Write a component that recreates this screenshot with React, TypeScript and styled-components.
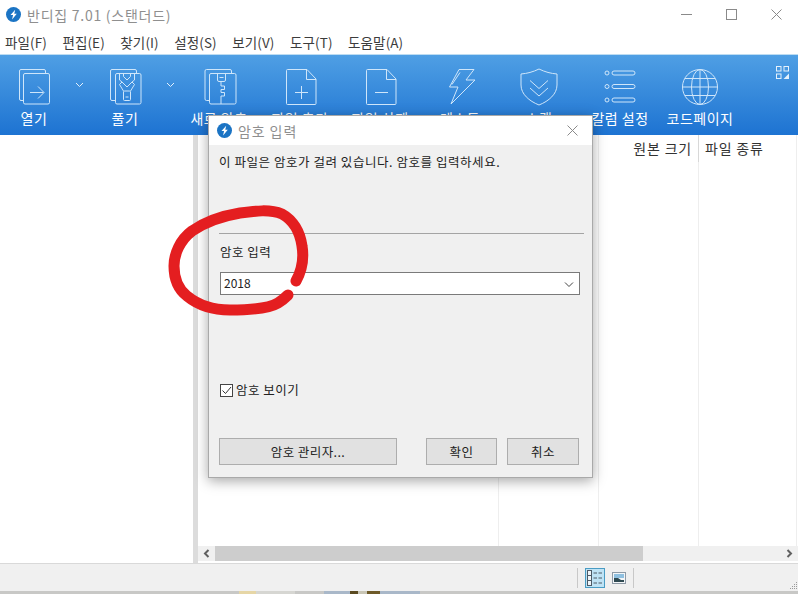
import React from "react";
import styled, { createGlobalStyle } from "styled-components";

const FONT = `"Noto Sans CJK KR", "Noto Sans", sans-serif`;

const Global = createGlobalStyle`
  html, body { margin: 0; padding: 0; background: #fff; overflow: hidden; }
  body { font-family: ${FONT}; }
  * { box-sizing: border-box; }
`;

const Page = styled.div`
  position: relative;
  width: 798px;
  height: 594px;
  display: flex;
  flex-direction: column;
  overflow: hidden;
  background: #fff;
`;

const TitleBar = styled.div`
  height: 29px;
  display: flex;
  align-items: center;
  padding-left: 6px;
  gap: 6px;
  flex: none;
`;
const TitleText = styled.span`
  font-size: 14px;
  color: #8f8f8f;
  letter-spacing: 0.75px;
`;
const WinButtons = styled.div`
  margin-left: auto;
  margin-right: -1px;
  display: flex;
  align-items: center;
  height: 100%;
`;
const WinButton = styled.div`
  width: 45px;
  height: 29px;
  display: flex;
  align-items: center;
  justify-content: center;
`;

const MenuBar = styled.div`
  height: 25px;
  display: flex;
  align-items: center;
  padding-left: 5px;
  gap: 15.5px;
  flex: none;
`;
const MenuItem = styled.span`
  font-size: 13.5px;
  color: #3c3c3c;
  letter-spacing: 0.1px;
`;

const Toolbar = styled.div`
  height: 81px;
  flex: none;
  border-top: 1px solid #bcdcf2;
  background: linear-gradient(#4f9fe4, #1d73d2);
  display: flex;
  position: relative;
`;
const ToolButton = styled.div<{ $w: number }>`
  width: ${(p) => p.$w}px;
  display: flex;
  flex-direction: column;
  align-items: center;
  padding-top: 13px;
  color: #fff;
`;
const ToolIcon = styled.svg`
  width: 44px;
  height: 38px;
  display: block;
  fill: none;
  stroke: #cfe6fa;
  stroke-width: 1;
`;
const ToolLabel = styled.span`
  font-size: 14px;
  line-height: 18px;
  margin-top: 3px;
  white-space: nowrap;
  color: #fff;
  letter-spacing: 0.5px;
`;
const DropChevron = styled.div<{ $w: number }>`
  width: ${(p) => p.$w}px;
  padding-top: 27px;
  display: flex;
  justify-content: center;
`;
const LayoutIcon = styled.svg`
  position: absolute;
  right: 9px;
  top: 11px;
  width: 13px;
  height: 13px;
`;

const Body = styled.div`
  flex: 1;
  display: flex;
  min-height: 0;
`;
const Tree = styled.div`
  width: 193px;
  background: #fff;
`;
const Splitter = styled.div`
  width: 5px;
  background: #dcdcdc;
`;
const ListPane = styled.div`
  flex: 1;
  display: flex;
  flex-direction: column;
  border-bottom: 2px solid #fff;
`;
const Columns = styled.div`
  flex: 1;
  display: flex;
`;
const Column = styled.div<{ $w: number }>`
  width: ${(p) => p.$w}px;
  flex: none;
  border-right: 1px solid #eeeeee;
  position: relative;
`;
const ColumnHead = styled.div<{ $right?: boolean }>`
  height: 25px;
  display: flex;
  align-items: center;
  justify-content: ${(p) => (p.$right ? "flex-end" : "flex-start")};
  padding: ${(p) => (p.$right ? "0 6px 0 0" : "0 0 0 6px")};
  font-size: 14px;
  letter-spacing: 0.8px;
  color: #333;
  white-space: nowrap;
`;
const HeadDivider = styled.div`
  position: absolute;
  right: -1px;
  top: 0;
  width: 1px;
  height: 27px;
  background: #d8d8d8;
`;
const HScroll = styled.div`
  height: 15px;
  flex: none;
  background: #f0f0f0;
  display: flex;
  align-items: center;
`;
const ScrollArrow = styled.div`
  width: 17px;
  height: 15px;
  display: flex;
  align-items: center;
  justify-content: center;
  flex: none;
`;
const ScrollThumb = styled.div`
  width: 428px;
  height: 15px;
  background: #cdcdcd;
  flex: none;
`;
const ScrollSpacer = styled.div`
  flex: 1;
`;

const StatusBar = styled.div`
  height: 28px;
  flex: none;
  background: #f0f0f0;
  border-top: 1px solid #d9d9d9;
  display: flex;
  align-items: center;
  justify-content: flex-end;
  position: relative;
`;
const StatusGroup = styled.div`
  display: flex;
  align-items: center;
  height: 20px;
  border-left: 1px solid #c8c8c8;
  border-right: 1px solid #c8c8c8;
  padding: 0 7px;
  gap: 7px;
  margin-right: 164px;
`;
const ViewActive = styled.div`
  width: 20px;
  height: 20px;
  background: #bfe3f5;
  border: 1px solid #4a9cc4;
  display: flex;
  align-items: center;
  justify-content: center;
`;
const Grip = styled.svg`
  position: absolute;
  right: 0;
  bottom: 1px;
  width: 10px;
  height: 10px;
`;
const Desktop = styled.div`
  height: 3px;
  flex: none;
  background: #c8c8c6;
  display: flex;
  padding-left: 239px;
`;
const DesktopPiece = styled.div<{ $w: number; $c: string; $ml?: number }>`
  width: ${(p) => p.$w}px;
  margin-left: ${(p) => p.$ml ?? 0}px;
  background: ${(p) => p.$c};
`;

/* dialog floats over the window */
const Dialog = styled.div`
  position: absolute;
  left: 208px;
  top: 115px;
  width: 385px;
  height: 363px;
  background: #f0f0f0;
  border: 1px solid #a9a9a9;
  box-shadow: 0 3px 12px rgba(0, 0, 0, 0.35);
  display: flex;
  flex-direction: column;
`;
const DialogTitle = styled.div`
  height: 29px;
  flex: none;
  background: #fff;
  display: flex;
  align-items: center;
  padding: 0 14px 0 8px;
  gap: 6px;
`;
const DialogTitleText = styled.span`
  font-size: 14px;
  color: #8f8f8f;
  letter-spacing: 0.9px;
`;
const DialogClose = styled.svg`
  margin-left: auto;
  width: 11px;
  height: 11px;
`;
const DialogBody = styled.div`
  flex: 1;
  display: flex;
  flex-direction: column;
  padding: 0 8px 0 10px;
`;
const Message = styled.div`
  font-size: 12.5px;
  line-height: 18px;
  color: #222;
  margin-top: 8px;
  letter-spacing: 0.55px;
`;
const Rule = styled.div`
  height: 1px;
  background: #a4a4a4;
  margin-top: 62px;
`;
const FieldLabel = styled.div`
  font-size: 12.5px;
  line-height: 18px;
  color: #222;
  margin-top: 9px;
  margin-left: 1px;
  letter-spacing: 0.5px;
`;
const Combo = styled.div`
  height: 23px;
  margin: 11px 4px 0 1px;
  border: 1px solid #7a7a7a;
  background: #fff;
  display: flex;
  align-items: center;
  padding: 0 3px 2px 3px;
  font-size: 12px;
  color: #222;
`;
const ComboChevron = styled.svg`
  margin-left: auto;
  margin-top: 2px;
  width: 14px;
  height: 14px;
`;
const CheckRow = styled.div`
  display: flex;
  align-items: center;
  margin-top: 86px;
  margin-left: 1px;
  gap: 3px;
  font-size: 12.5px;
  line-height: 18px;
  color: #222;
  letter-spacing: 0.5px;
`;
const CheckBox = styled.div`
  width: 13px;
  height: 13px;
  background: #fff;
  border: 1px solid #444;
  display: flex;
  align-items: center;
  justify-content: center;
`;
const ButtonRow = styled.div`
  display: flex;
  margin-top: 39px;
`;
const DialogButton = styled.div<{ $w: number; $ml?: number }>`
  width: ${(p) => p.$w}px;
  margin-left: ${(p) => p.$ml ?? 0}px;
  height: 27px;
  background: #e1e1e1;
  border: 1px solid #adadad;
  display: flex;
  align-items: center;
  justify-content: center;
  font-size: 12.5px;
  color: #222;
  letter-spacing: 0.4px;
`;
const Scribble = styled.svg`
  position: absolute;
  left: 160px;
  top: 200px;
  width: 160px;
  height: 125px;
  pointer-events: none;
`;

const BoltLogo = ({ size }: { size: number }) => (
  <svg width={size} height={size} viewBox="0 0 16 16">
    <circle cx="8" cy="8" r="8" fill="#1b74c4" />
    <path d="M9.8 2.8 4.8 8.6h2.7l-1 4.6 5-6H8.8z" fill="#fff" />
  </svg>
);

const Chevron = () => (
  <svg width="9" height="6" viewBox="0 0 9 6" fill="none" stroke="#e4f1fc" strokeWidth="1">
    <path d="M1 1l3.500 3.500L8 1" />
  </svg>
);

const IconOpen = () => (
  <ToolIcon viewBox="0 0 44 38">
    <path d="M33.500 5.500V3a1.500 1.500 0 0 0-1.500-1.500H9A1.500 1.500 0 0 0 7.500 3v28A1.500 1.500 0 0 0 9 32.500h2.500" />
    <rect x="11.500" y="5.500" width="26" height="30.500" rx="1.500" />
    <path d="M18 24.500h13.500M26 18.500l6 6-6 6" />
  </ToolIcon>
);
const IconExtract = () => (
  <ToolIcon viewBox="0 0 44 38">
    <path d="M33.500 5.500V3A1.500 1.500 0 0 0 32 1.500H9A1.500 1.500 0 0 0 7.500 3v28A1.500 1.500 0 0 0 9 32.500h3" />
    <rect x="12.500" y="5.500" width="25.500" height="30.500" rx="1.500" />
    <path d="M16.500 5.500v6.500l2.500 2-2.500 2.500 4 6.500M31.500 5.500v6.500l-2.500 2 2.500 2.500-4 6.500" />
    <path d="M19 14l5 5 5-5" />
    <path d="M20.500 5.500v3l3.500 3.500 3.500-3.500v-3" />
    <rect x="20.500" y="23" width="7" height="9.500" rx="1" />
    <path d="M22.500 29h3" />
  </ToolIcon>
);
const IconNew = () => (
  <ToolIcon viewBox="0 0 44 38">
    <path d="M34.500 5.500V3A1.500 1.500 0 0 0 33 1.500H9.500A1.500 1.500 0 0 0 8 3v28a1.500 1.500 0 0 0 1.500 1.500H12" />
    <rect x="12.500" y="5.500" width="26.500" height="30.500" rx="1.500" />
    <path d="M20.500 5.500V12a1.500 1.500 0 0 0 1.500 1.500h5a1.500 1.500 0 0 0 1.500-1.500V5.500" />
    <path d="M22.500 9.500h4" />
    <path d="M24 13.500V18h3.500v3.500H24v3h3.500V28H24v8" />
  </ToolIcon>
);
const IconDoc = ({ minus }: { minus?: boolean }) => (
  <ToolIcon viewBox="0 0 44 38">
    <path d="M9.500 1.500H29L38 11v24.500a1 1 0 0 1-1 1H9.500a1 1 0 0 1-1-1v-33a1 1 0 0 1 1-1z" />
    <path d="M28.500 1.500v10h9.500" />
    <path d={minus ? "M17 24.500h13" : "M23.500 18v13M17 24.500h13"} />
  </ToolIcon>
);
const IconBolt = () => (
  <ToolIcon viewBox="0 0 44 38">
    <path d="M21 1.500h15L28 12h9L13 36l7-17h-8.500z" />
    <path d="M22 4.500l-8 12" />
  </ToolIcon>
);
const IconShield = () => (
  <ToolIcon viewBox="0 0 44 38">
    <path d="M22 1c6 3 12 4.500 18 5v11c0 9-8 16-18 20C12 33 4 26 4 17V6c6-.500 12-2 18-5z" />
    <path d="M13 12.500l9 8 9-8M13 20l9 8 9-8" />
  </ToolIcon>
);
const IconColumns = () => (
  <ToolIcon viewBox="0 0 44 38">
    <circle cx="9" cy="5" r="2" />
    <circle cx="9" cy="18.500" r="2" />
    <circle cx="9" cy="32" r="2" />
    <rect x="14" y="3" width="23" height="4" rx="2" />
    <rect x="14" y="16.500" width="23" height="4" rx="2" />
    <rect x="14" y="30" width="23" height="4" rx="2" />
  </ToolIcon>
);
const IconGlobe = () => (
  <ToolIcon viewBox="0 0 44 38">
    <circle cx="22" cy="19" r="17.500" />
    <ellipse cx="22" cy="19" rx="8.500" ry="17.500" />
    <path d="M22 1.500v35M4.500 19h35M7 10.500h30M7 27.500h30" />
  </ToolIcon>
);

const tools: { w: number; label?: string; icon?: React.ReactNode; chevron?: boolean }[] = [
  { w: 68, label: "열기", icon: <IconOpen /> },
  { w: 22, chevron: true },
  { w: 70, label: "풀기", icon: <IconExtract /> },
  { w: 20, chevron: true },
  { w: 78, label: "새로 압축", icon: <IconNew /> },
  { w: 84, label: "파일 추가", icon: <IconDoc /> },
  { w: 76, label: "파일 삭제", icon: <IconDoc minus /> },
  { w: 84, label: "테스트", icon: <IconBolt /> },
  { w: 74, label: "스캔", icon: <IconShield /> },
  { w: 88, label: "칼럼 설정", icon: <IconColumns /> },
  { w: 72, label: "코드페이지", icon: <IconGlobe /> },
];

const menus = ["파일(F)", "편집(E)", "찾기(I)", "설정(S)", "보기(V)", "도구(T)", "도움말(A)"];

export default function App() {
  return (
    <Page>
      <Global />
      <TitleBar>
        <BoltLogo size={15} />
        <TitleText>반디집 7.01 (스탠더드)</TitleText>
        <WinButtons>
          <WinButton>
            <svg width="11" height="11" viewBox="0 0 11 11" stroke="#8a8a8a"><path d="M0 5.500h11" /></svg>
          </WinButton>
          <WinButton>
            <svg width="11" height="11" viewBox="0 0 11 11" fill="none" stroke="#8a8a8a"><rect x=".5" y=".5" width="10" height="10" /></svg>
          </WinButton>
          <WinButton>
            <svg width="11" height="11" viewBox="0 0 11 11" stroke="#8a8a8a"><path d="M.5.5l10 10M10.500.5l-10 10" /></svg>
          </WinButton>
        </WinButtons>
      </TitleBar>
      <MenuBar>
        {menus.map((m) => (
          <MenuItem key={m}>{m}</MenuItem>
        ))}
      </MenuBar>
      <Toolbar>
        {tools.map((t, i) =>
          t.chevron ? (
            <DropChevron key={i} $w={t.w}>
              <Chevron />
            </DropChevron>
          ) : (
            <ToolButton key={i} $w={t.w}>
              {t.icon}
              <ToolLabel>{t.label}</ToolLabel>
            </ToolButton>
          )
        )}
        <LayoutIcon viewBox="0 0 13 13" fill="none" stroke="#e4f1fc">
          <rect x=".5" y=".5" width="4.500" height="4.500" />
          <rect x="8" y=".5" width="4.500" height="4.500" />
          <rect x=".5" y="8" width="4.500" height="4.500" />
          <path d="M7.500 13l5.500-5.500V13z" fill="#e4f1fc" stroke="none" />
        </LayoutIcon>
      </Toolbar>
      <Body>
        <Tree />
        <Splitter />
        <ListPane>
          <Columns>
            <Column $w={301} />
            <Column $w={100} />
            <Column $w={100}>
              <ColumnHead $right>원본 크기</ColumnHead>
              <HeadDivider />
            </Column>
            <Column $w={98}>
              <ColumnHead>파일 종류</ColumnHead>
            </Column>
          </Columns>
          <HScroll>
            <ScrollArrow>
              <svg width="7" height="9" viewBox="0 0 7 9" fill="none" stroke="#606060" strokeWidth="2"><path d="M5.500 1l-3.500 3.500L5.500 8" /></svg>
            </ScrollArrow>
            <ScrollThumb />
            <ScrollSpacer />
            <ScrollArrow>
              <svg width="7" height="9" viewBox="0 0 7 9" fill="none" stroke="#606060" strokeWidth="2"><path d="M1.500 1L5 4.500 1.500 8" /></svg>
            </ScrollArrow>
          </HScroll>
        </ListPane>
      </Body>
      <StatusBar>
        <StatusGroup>
          <ViewActive>
            <svg width="16" height="16" viewBox="0 0 16 16" fill="none" stroke="#4d5a66">
              <rect x=".5" y=".5" width="4" height="15" fill="#eef4f8" />
              <path d="M.5 5.500h4M.5 10.500h4" />
              <path d="M6.500 3h3.500M11.500 3H15M6.500 8h3.500M11.500 8H15M6.500 13h3.500M11.500 13H15" />
            </svg>
          </ViewActive>
          <svg width="14" height="12" viewBox="0 0 14 12">
            <rect x=".5" y=".5" width="13" height="11" fill="#f4f6f8" stroke="#8e9aa6" />
            <rect x="2" y="2" width="10" height="4" fill="#8fc0e0" />
            <path d="M2 6h4l3 2h3v2H2z" fill="#2f4a52" />
          </svg>
        </StatusGroup>
        <Grip viewBox="0 0 10 10" fill="#9a9a9a">
          <rect x="8" y="2" width="1" height="1" />
          <rect x="6" y="4" width="1" height="1" />
          <rect x="8" y="4" width="1" height="1" />
          <rect x="4" y="6" width="1" height="1" />
          <rect x="6" y="6" width="1" height="1" />
          <rect x="8" y="6" width="1" height="1" />
          <rect x="2" y="8" width="1" height="1" />
          <rect x="4" y="8" width="1" height="1" />
          <rect x="6" y="8" width="1" height="1" />
          <rect x="8" y="8" width="1" height="1" />
        </Grip>
      </StatusBar>
      <Desktop>
        <DesktopPiece $w={17} $c="#e6d6a6" />
        <DesktopPiece $w={39} $c="#d6d6d2" />
        <DesktopPiece $w={26} $c="#a9b8c9" $ml={29} />
        <DesktopPiece $w={8} $c="#5a4a20" />
        <DesktopPiece $w={9} $c="#c9c6b6" />
        <DesktopPiece $w={13} $c="#6e5a28" />
        <DesktopPiece $w={40} $c="#a9b8c9" />
      </Desktop>

      <Dialog>
        <DialogTitle>
          <BoltLogo size={15} />
          <DialogTitleText>암호 입력</DialogTitleText>
          <DialogClose viewBox="0 0 11 11" stroke="#8a8a8a">
            <path d="M.5.5l10 10M10.500.5l-10 10" />
          </DialogClose>
        </DialogTitle>
        <DialogBody>
          <Message>이 파일은 암호가 걸려 있습니다. 암호를 입력하세요.</Message>
          <Rule />
          <FieldLabel>암호 입력</FieldLabel>
          <Combo>
            2018
            <ComboChevron viewBox="0 0 14 14" fill="none" stroke="#444">
              <path d="M3 5.500l4 4 4-4" />
            </ComboChevron>
          </Combo>
          <CheckRow>
            <CheckBox>
              <svg width="11" height="11" viewBox="0 0 11 11" fill="none" stroke="#333"><path d="M1.500 5.500l3 3L10 2" /></svg>
            </CheckBox>
            암호 보이기
          </CheckRow>
          <ButtonRow>
            <DialogButton $w={178}>암호 관리자...</DialogButton>
            <DialogButton $w={71} $ml={29}>확인</DialogButton>
            <DialogButton $w={72} $ml={10}>취소</DialogButton>
          </ButtonRow>
        </DialogBody>
      </Dialog>
      <Scribble viewBox="160 200 160 125" fill="none" stroke="#e41e20" strokeWidth="11" strokeLinecap="round" strokeLinejoin="round">
        <path d="M296 281C302 270 304 258 302 246C300 232 293 220 282 214C270 209 255 211 240 213C222 216 205 222 192 231C180 240 174 254 174 266C174 278 178 289 187 296C198 305 213 310 230 310C248 310 268 309 278 303C283 300 286 297 288 295" />
      </Scribble>
    </Page>
  );
}
